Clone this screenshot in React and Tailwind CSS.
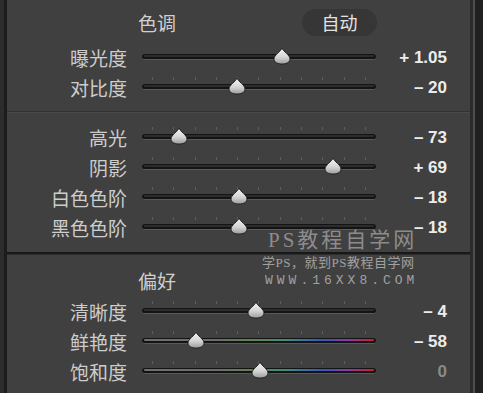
import React from 'react'

const cjk = { fontFamily: '"Noto Sans CJK SC", "Noto Sans", sans-serif' }

const Thumb = () => (
  <svg width="19" height="18" viewBox="0 0 19 18" className="block">
    <defs>
      <linearGradient id="tg" x1="0" y1="0" x2="0" y2="1">
        <stop offset="0" stopColor="#f4f4f4" />
        <stop offset="0.55" stopColor="#d6d6d6" />
        <stop offset="1" stopColor="#9c9c9c" />
      </linearGradient>
    </defs>
    <path d="M9.5 1 C10.5 4.5 17.5 8 17.5 12 C17.5 15.3 14 17 9.5 17 C5 17 1.5 15.3 1.5 12 C1.5 8 8.5 4.5 9.5 1 Z" fill="url(#tg)" stroke="#1c1c1c" strokeWidth="0.9" />
  </svg>
)

const Slider = ({ pos, ticks = true, color = false }) => (
  <div className="relative w-[234px] h-full">
    {ticks && (
      <div className="absolute left-[10px] right-[10px] top-[5px] flex justify-between">
        {Array.from({ length: 11 }).map((_, i) => (
          <div key={i} className="w-px h-[3px] bg-[#5e5e5e]" />
        ))}
      </div>
    )}
    <div className="absolute left-0 right-0 top-[12px] h-[6px] rounded-full bg-[#141414] border-b border-[#595959]">
      <div
        className={
          color
            ? 'absolute left-[2px] right-[2px] top-[1px] h-[2px] rounded-full bg-[linear-gradient(to_right,#707070_0%,#6c6c6c_30%,#5f8450_48%,#3f8c80_62%,#3a55b8_78%,#9038a8_89%,#c81e2c_100%)]'
            : 'absolute left-[2px] right-[2px] top-[1px] h-[2px] rounded-full bg-[#2c2c2c]'
        }
      />
    </div>
    <div className="absolute top-[5px] -translate-x-1/2" style={{ left: pos + '%' }}>
      <Thumb />
    </div>
  </div>
)

const Row = ({ label, pos, value, ticks, color, dim }) => (
  <div className="flex items-center h-[30px]">
    <div className="w-[120px] text-right text-[19px] leading-none text-[#cdcdcd]" style={cjk}>
      {label}
    </div>
    <div className="ml-[15px] h-full">
      <Slider pos={pos} ticks={ticks} color={color} />
    </div>
    <div
      className={
        'w-[71px] text-right text-[17px] font-bold leading-none ' +
        (dim ? 'text-[#8a8a8a]' : 'text-[#ececec]')
      }
      style={{ fontFamily: '"Liberation Sans", Arial, sans-serif' }}
    >
      {value}
    </div>
  </div>
)

export default function App() {
  return (
    <div className="w-[483px] h-[393px] flex bg-[#242424] overflow-hidden">
      <div className="w-[4px] bg-[#2c2c2c]" />
      <div className="w-[3px] bg-[#1c1c1c]" />
      <div className="relative w-[463px] h-full bg-[#404040] flex flex-col">
        <div className="pt-[9px] h-[111px]">
          <div className="flex items-center h-[27px]">
            <div className="ml-[131px] w-[164px] text-[19px] leading-none text-[#d0d0d0]" style={cjk}>
              色调
            </div>
            <div
              className="w-[75px] h-[27px] rounded-full bg-[#363636] flex items-center justify-center text-[18px] text-[#e2e2e2]"
              style={cjk}
            >
              自动
            </div>
          </div>
          <div className="mt-[6px]">
            <Row label="曝光度" pos={60} value="+ 1.05" ticks={false} />
            <Row label="对比度" pos={40.5} value="– 20" />
          </div>
        </div>
        <div className="h-[2px] border-t border-[#323232] border-b border-b-[#4a4a4a]" />
        <div className="pt-[9px] h-[139px]">
          <Row label="高光" pos={16} value="– 73" />
          <Row label="阴影" pos={81.5} value="+ 69" />
          <Row label="白色色阶" pos={41.5} value="– 18" />
          <Row label="黑色色阶" pos={41.5} value="– 18" />
        </div>
        <div className="h-[3px] bg-[#181818] border-b border-[#2e2e2e]" />
        <div className="pt-[10px] flex-1">
          <div className="h-[30px] flex items-center">
            <div className="ml-[131px] text-[19px] leading-none text-[#d0d0d0]" style={cjk}>
              偏好
            </div>
          </div>
          <div className="mt-[1px]">
            <Row label="清晰度" pos={48.7} value="– 4" />
            <Row label="鲜艳度" pos={23} value="– 58" color />
            <Row label="饱和度" pos={50.4} value="0" color dim />
          </div>
        </div>

        <div className="absolute left-[261px] top-[230px] text-[21px] leading-none tracking-[3px] text-[#8c8c8c]" style={{ fontFamily: '"Liberation Serif", "Noto Sans CJK SC", serif' }}>
          PS教程自学网
        </div>
        <div className="absolute left-[255px] top-[256px] text-[13px] leading-none tracking-[0.5px] text-[#a0a0a0]" style={{ fontFamily: '"Liberation Serif", "Noto Sans CJK SC", serif' }}>
          学PS，就到PS教程自学网
        </div>
        <div className="absolute left-[258px] top-[274px] text-[13px] leading-none tracking-[4px] text-[#a0a0a0]" style={{ fontFamily: '"Liberation Mono", monospace' }}>
          WWW.16XX8.COM
        </div>
      </div>
      <div className="w-[3px] bg-[#2a2a2a]" />
      <div className="w-[2px] bg-[#4e4e4e]" />
      <div className="flex-1 bg-[#202020]" />
    </div>
  )
}
